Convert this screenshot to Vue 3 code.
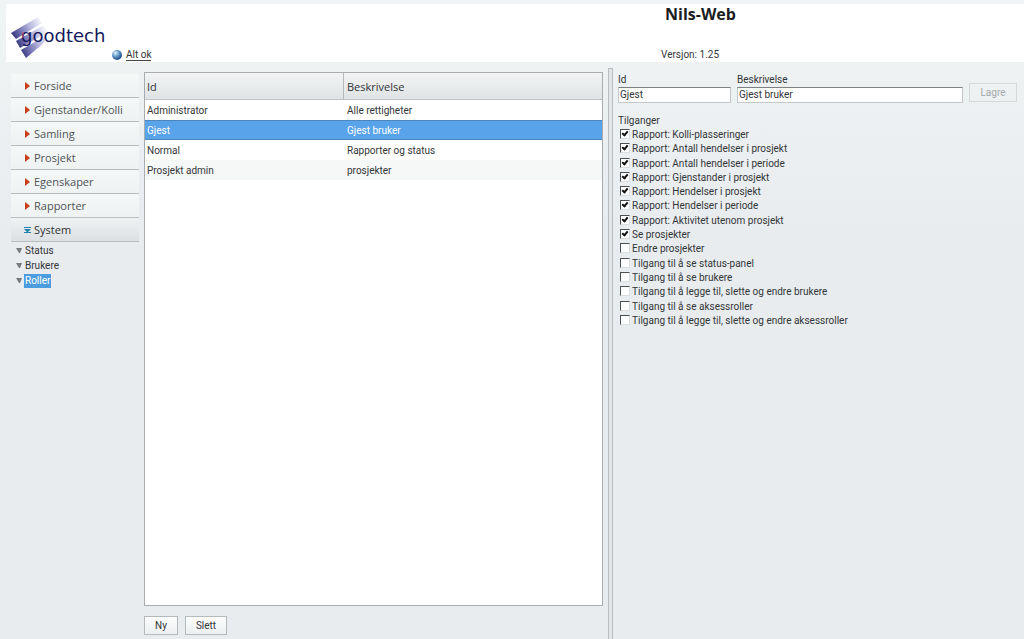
<script setup>
import { ref } from 'vue'

const menu = ['Forside', 'Gjenstander/Kolli', 'Samling', 'Prosjekt', 'Egenskaper', 'Rapporter', 'System']
const subMenu = ['Status', 'Brukere', 'Roller']
const roles = [
  { id: 'Administrator', text: 'Alle rettigheter' },
  { id: 'Gjest', text: 'Gjest bruker' },
  { id: 'Normal', text: 'Rapporter og status' },
  { id: 'Prosjekt admin', text: 'prosjekter' },
]
const roleId = ref('Gjest')
const roleText = ref('Gjest bruker')
const rights = ref([
  { label: 'Rapport: Kolli-plasseringer', on: true },
  { label: 'Rapport: Antall hendelser i prosjekt', on: true },
  { label: 'Rapport: Antall hendelser i periode', on: true },
  { label: 'Rapport: Gjenstander i prosjekt', on: true },
  { label: 'Rapport: Hendelser i prosjekt', on: true },
  { label: 'Rapport: Hendelser i periode', on: true },
  { label: 'Rapport: Aktivitet utenom prosjekt', on: true },
  { label: 'Se prosjekter', on: true },
  { label: 'Endre prosjekter', on: false },
  { label: 'Tilgang til å se status-panel', on: false },
  { label: 'Tilgang til å se brukere', on: false },
  { label: 'Tilgang til å legge til, slette og endre brukere', on: false },
  { label: 'Tilgang til å se aksessroller', on: false },
  { label: 'Tilgang til å legge til, slette og endre aksessroller', on: false },
])
</script>

<template>
  <div class="app">
    <header class="top">
      <div class="brand">
        <svg class="logo" width="104" height="42" viewBox="0 0 104 42" role="img" aria-label="goodtech">
          <defs>
            <linearGradient id="fade" gradientUnits="userSpaceOnUse" x1="2" y1="24" x2="34" y2="8">
              <stop offset="0" stop-color="#2b2b72" />
              <stop offset="0.3" stop-color="#7474b4" />
              <stop offset="0.6" stop-color="#b9b9e0" />
              <stop offset="1" stop-color="#ffffff" />
            </linearGradient>
          </defs>
          <path d="M0 17 L27 1 L31 7 L5 23 Z" fill="url(#fade)" />
          <path d="M5 25 L33 9 L37 16 L9 32 Z" fill="url(#fade)" />
          <path d="M10 34 L36 19 L34 26 L15 42 Z" fill="url(#fade)" />
          <text x="10" y="26" class="logo-text">goodtech</text>
          <path d="M12 16 V22" stroke="#d8506a" stroke-width="1" />
        </svg>
        <div class="state">
          <svg width="10" height="10" viewBox="0 0 10 10" aria-hidden="true">
            <defs>
              <radialGradient id="orb" cx="0.35" cy="0.3" r="0.7">
                <stop offset="0" stop-color="#e4f2fb" />
                <stop offset="0.45" stop-color="#6fa3d0" />
                <stop offset="1" stop-color="#1c4c86" />
              </radialGradient>
            </defs>
            <circle cx="5" cy="5" r="5" fill="url(#orb)" />
          </svg>
          <a href="#">Alt ok</a>
        </div>
      </div>
      <div class="title">
        <h1>Nils-Web</h1>
        <p>Versjon: 1.25</p>
      </div>
    </header>

    <div class="body">
      <nav class="side">
        <a v-for="(m, i) in menu" :key="m" href="#" class="item" :class="{ open: i === menu.length - 1 }">
          <svg v-if="i < menu.length - 1" width="8" height="8" viewBox="0 0 8 8" aria-hidden="true">
            <path d="M2 0 L7 4 L2 8 Z" fill="#c73d1d" />
          </svg>
          <svg v-else width="8" height="8" viewBox="0 0 8 8" aria-hidden="true">
            <path d="M1 1 H8 V2 H1 Z M1 3 H8 L5 6 H8 V7 H1 V6 H4 Z" fill="#2482ae" />
          </svg>
          <span>{{ m }}</span>
        </a>
        <ul class="sub">
          <li v-for="s in subMenu" :key="s">
            <svg width="6" height="6" viewBox="0 0 6 6" aria-hidden="true">
              <path d="M0 0 H6 L4 5 H3 Z" fill="#777b7d" />
            </svg>
            <a href="#" :class="{ current: s === 'Roller' }">{{ s }}</a>
          </li>
        </ul>
      </nav>

      <main class="list">
        <div class="grid-box">
          <table>
            <thead>
              <tr><th class="col-id">Id</th><th>Beskrivelse</th></tr>
            </thead>
            <tbody>
              <tr v-for="r in roles" :key="r.id" :class="{ selected: r.id === 'Gjest' }">
                <td>{{ r.id }}</td><td>{{ r.text }}</td>
              </tr>
            </tbody>
          </table>
        </div>
        <div class="actions">
          <button type="button">Ny</button>
          <button type="button">Slett</button>
        </div>
      </main>

      <div class="splitter"></div>

      <section class="detail">
        <div class="fields">
          <div class="field narrow">
            <label for="role-id">Id</label>
            <input id="role-id" v-model="roleId" type="text" />
          </div>
          <div class="field wide">
            <label for="role-text">Beskrivelse</label>
            <input id="role-text" v-model="roleText" type="text" />
          </div>
          <button type="button" class="save" disabled>Lagre</button>
        </div>
        <fieldset>
          <legend>Tilganger</legend>
          <div class="rights">
            <label v-for="r in rights" :key="r.label">
              <input v-model="r.on" type="checkbox" />
              <span>{{ r.label }}</span>
            </label>
          </div>
        </fieldset>
      </section>
    </div>
  </div>
</template>

<style>
body {
  background: #e8ecef;
}
</style>

<style scoped>
.app {
  box-sizing: border-box;
  min-height: 100vh;
  display: flex;
  flex-direction: column;
  padding-top: 4px;
  font-family: "Trebuchet MS", Roboto, sans-serif;
  font-size: 10px;
  line-height: 14px;
  color: #333638;
  background: linear-gradient(#f1f4f4, #e8ecef 240px);
}
.top {
  display: flex;
  height: 58px;
  margin-left: 6px;
  background: #fff;
}
.brand {
  display: flex;
  flex: 377 1 0;
  align-items: flex-start;
}
.logo {
  flex: none;
  margin: 12px 0 0 5px;
}
.logo-text {
  font-family: "DejaVu Sans", sans-serif;
  font-size: 18px;
  fill: #14185c;
}
.state {
  display: flex;
  gap: 4px;
  align-items: center;
  align-self: flex-end;
  margin: 0 0 1px -3px;
}
.state a {
  color: #333;
  text-decoration: none;
  line-height: 11px;
  border-bottom: 1px solid #444;
}
.title {
  flex: 641 1 0;
}
h1 {
  margin: 0 0 0 282px;
  font-family: "Trebuchet MS", "Open Sans", "Noto Sans", sans-serif;
  font-size: 16px;
  line-height: 20px;
  color: #1c1d22;
}
.title p {
  margin: 24px 0 0 278px;
}
.body {
  flex: 1;
  display: flex;
  padding-left: 11px;
}
.side {
  flex: none;
  width: 128px;
  margin-top: 12px;
}
.item {
  box-sizing: border-box;
  display: flex;
  align-items: center;
  gap: 3px;
  height: 24px;
  padding: 1px 0 0 12px;
  border-bottom: 1px solid #b9bdbf;
  font-family: "Trebuchet MS", "Open Sans", "Noto Sans", sans-serif;
  font-size: 11px;
  color: #4f5355;
  text-decoration: none;
  background: linear-gradient(#f5f8f7, #eef2f2);
}
.item.open {
  color: #303335;
  background: linear-gradient(#eff2f3, #dce0e3);
}
.sub {
  margin: 1px 0 0;
  padding: 0 0 0 5px;
  list-style: none;
}
.sub li {
  display: flex;
  align-items: center;
  gap: 2px;
  height: 15px;
}
.sub a {
  padding: 0 1px;
  color: #333638;
  text-decoration: none;
}
.sub .current {
  color: #fff;
  background: #4c9ce0;
}
.list {
  flex: 459 1 0;
  display: flex;
  flex-direction: column;
  margin: 10px 5px 4px;
}
.grid-box {
  flex: 1;
  border: 1px solid #a9adaf;
  background: #fff;
}
table {
  width: 100%;
  border-collapse: separate;
  border-spacing: 0;
  table-layout: fixed;
}
th {
  box-sizing: border-box;
  height: 27px;
  padding: 1px 3px 0;
  text-align: left;
  font-family: "Trebuchet MS", "Open Sans", "Noto Sans", sans-serif;
  font-weight: 400;
  font-size: 11px;
  color: #303335;
  border-bottom: 1px solid #bfc3c5;
  background: linear-gradient(#f2f4f4, #e0e3e5);
}
.col-id {
  width: 199px;
  border-right: 1px solid #b5b9bb;
}
td {
  box-sizing: border-box;
  height: 20px;
  padding: 2px 3px 0;
}
td:first-child,
.col-id {
  padding-left: 2px;
}
tbody tr:nth-child(even) {
  background: #f6f7f7;
}
tbody tr.selected {
  color: #fff;
  background: #58a3ea;
  box-shadow: inset 0 1px #4b86be, inset 0 -1px #4b86be;
}
.actions {
  display: flex;
  gap: 7px;
  margin-top: 10px;
}
button {
  box-sizing: border-box;
  height: 19px;
  padding: 1px 10px 0;
  border: 1px solid #b4b9bb;
  font: inherit;
  color: #333638;
  background: linear-gradient(#fdfdfd, #eceff0);
}
.splitter {
  box-sizing: border-box;
  flex: none;
  width: 5px;
  margin-top: 6px;
  border: 1px solid #b9bdbf;
  border-bottom: 0;
  background: #e2e6e8;
}
.detail {
  flex: 399 1 0;
  min-width: 0;
  margin: 11px 7px 0 5px;
}
.fields {
  display: flex;
  gap: 6px;
  align-items: flex-end;
}
.field {
  display: flex;
  flex-direction: column;
}
.narrow {
  flex: 113 1 0;
}
.wide {
  flex: 226 1 0;
}
.field input {
  box-sizing: border-box;
  width: 100%;
  height: 16px;
  padding: 0 1px 1px;
  border: 1px solid #c3c7c9;
  border-top-color: #7d8183;
  font: inherit;
  color: #333638;
  background: #fff;
}
.save {
  width: 48px;
  height: 19px;
  margin-bottom: 1px;
  padding: 0;
  border-color: #d5d9da;
  color: #a5a9ab;
  background: #eef1f2;
}
fieldset {
  min-width: 0;
  margin: 0;
  padding: 0;
  border: 0;
}
legend {
  padding: 11px 0 0;
}
.rights {
  display: flex;
  flex-direction: column;
  justify-content: space-between;
  height: 200px;
}
.rights label {
  display: flex;
  align-items: center;
  gap: 2px;
  height: 14px;
  margin-left: 2px;
}
.rights input {
  appearance: none;
  display: grid;
  width: 10px;
  height: 10px;
  margin: 0 0 2px;
  border: 1px solid #dcdfe0;
  border-top-color: #4c4f50;
  border-left-color: #4c4f50;
  box-sizing: border-box;
  background: #fff;
}
.rights input:checked::after {
  content: "";
  width: 2px;
  height: 4px;
  margin: 0 0 0 2px;
  border: solid #111;
  border-width: 0 2px 2px 0;
  transform: rotate(40deg);
}
</style>
